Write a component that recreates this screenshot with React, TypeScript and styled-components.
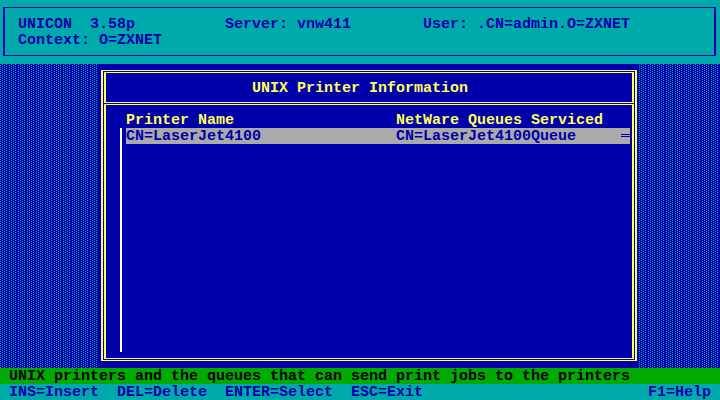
import React from 'react';
import styled, { createGlobalStyle } from 'styled-components';

const vga = {
  blue: '#0000AA',
  cyan: '#00AAAA',
  green: '#00AA00',
  yellow: '#FFFF55',
  gray: '#AAAAAA',
  white: '#FFFFFF',
  black: '#000000',
};

const GlobalStyle = createGlobalStyle`
  html, body {
    margin: 0;
    padding: 0;
    background: ${vga.black};
  }
  body {
    font-family: "Liberation Mono", "DejaVu Sans Mono", monospace;
    font-size: 15px;
    font-weight: bold;
  }
`;

const Screen = styled.div`
  width: 720px;
  height: 400px;
  display: flex;
  flex-direction: column;
  overflow: hidden;
`;

// one text-mode row: 16px cell, baseline nudged to VGA position
const TextRow = styled.div<{ $color?: string }>`
  height: 16px;
  line-height: 18px;
  white-space: pre;
  color: ${p => p.$color || 'inherit'};
`;

const Header = styled.div`
  height: 64px;
  box-sizing: border-box;
  background: ${vga.cyan};
  color: ${vga.blue};
  padding: 7px 4px 8px 3px;
`;

const HeaderBox = styled.div`
  height: 49px;
  box-sizing: border-box;
  border: solid ${vga.blue};
  border-width: 1px 2px;
  padding: 8px 0 0 13px;
`;

// the ░ shade: cyan dots on blue, 9x2 repeat
const dot = `conic-gradient(at 1px 1px, transparent 75%, ${vga.cyan} 0)`;

const Desktop = styled.div`
  height: 304px;
  display: flex;
  padding-left: 99px;
  background-color: ${vga.blue};
  background-image: ${dot}, ${dot}, ${dot}, ${dot};
  background-size: 9px 2px;
  background-position: 2px 0, 6px 0, 0 1px, 4px 1px;
`;

const Dialog = styled.div`
  width: 540px;
  height: 304px;
  box-sizing: border-box;
  background: ${vga.blue};
  padding: 6px 2px 7px 2px;
  display: flex;
`;

const OuterFrame = styled.div`
  flex: 1;
  display: flex;
  flex-direction: column;
  gap: 1px;
  padding: 1px;
  border: solid ${vga.yellow};
  border-width: 1px 2px;
`;

const TitleBox = styled.div`
  height: 31px;
  box-sizing: border-box;
  border: solid ${vga.yellow};
  border-width: 1px 2px;
  padding: 7px 0 0 146px;
  color: ${vga.yellow};
`;

const ContentBox = styled.div`
  flex: 1;
  display: flex;
  flex-direction: column;
  border: solid ${vga.yellow};
  border-width: 1px 2px;
  padding-top: 7px;
`;

const ColumnHeads = styled.div`
  display: grid;
  grid-template-columns: 270px 1fr;
  padding-left: 20px;
  color: ${vga.yellow};
`;

const ListArea = styled.div`
  height: 224px;
  display: flex;
`;

const Rail = styled.div`
  width: 2px;
  margin-left: 14px;
  background: ${vga.white};
`;

const List = styled.div`
  flex: 1;
  margin: 0 2px 0 4px;
`;

const ItemRow = styled.div<{ $selected?: boolean }>`
  display: grid;
  grid-template-columns: 270px 1fr 9px;
  background: ${p => (p.$selected ? vga.gray : 'transparent')};
  color: ${p => (p.$selected ? vga.blue : vga.white)};
`;

// double-line marker (═) at the end of the row
const MoreMark = styled.div`
  height: 1px;
  margin-top: 6px;
  border-top: 1px solid ${vga.blue};
  border-bottom: 1px solid ${vga.blue};
  align-self: start;
`;

const StatusBar = styled.div`
  background: ${vga.green};
  color: ${vga.black};
  padding-left: 9px;
`;

const KeyBar = styled.div`
  display: flex;
  justify-content: space-between;
  background: ${vga.cyan};
  color: ${vga.blue};
  padding: 0 9px;
`;

const printers = [
  { name: 'CN=LaserJet4100', queue: 'CN=LaserJet4100Queue', more: true },
];

export default function App() {
  return (
    <>
      <GlobalStyle />
      <Screen>
        <Header>
          <HeaderBox>
            <TextRow>{'UNICON  3.58p          Server: vnw411        User: .CN=admin.O=ZXNET'}</TextRow>
            <TextRow>{'Context: O=ZXNET'}</TextRow>
          </HeaderBox>
        </Header>

        <Desktop>
          <Dialog>
            <OuterFrame>
              <TitleBox>
                <TextRow>UNIX Printer Information</TextRow>
              </TitleBox>
              <ContentBox>
                <ColumnHeads>
                  <TextRow>Printer Name</TextRow>
                  <TextRow>NetWare Queues Serviced</TextRow>
                </ColumnHeads>
                <ListArea>
                  <Rail />
                  <List>
                    {printers.map((p, i) => (
                      <ItemRow key={p.name} $selected={i === 0}>
                        <TextRow>{p.name}</TextRow>
                        <TextRow>{p.queue}</TextRow>
                        {p.more ? <MoreMark /> : <span />}
                      </ItemRow>
                    ))}
                  </List>
                </ListArea>
              </ContentBox>
            </OuterFrame>
          </Dialog>
        </Desktop>

        <StatusBar>
          <TextRow>UNIX printers and the queues that can send print jobs to the printers</TextRow>
        </StatusBar>
        <KeyBar>
          <TextRow>{'INS=Insert  DEL=Delete  ENTER=Select  ESC=Exit'}</TextRow>
          <TextRow>F1=Help</TextRow>
        </KeyBar>
      </Screen>
    </>
  );
}
